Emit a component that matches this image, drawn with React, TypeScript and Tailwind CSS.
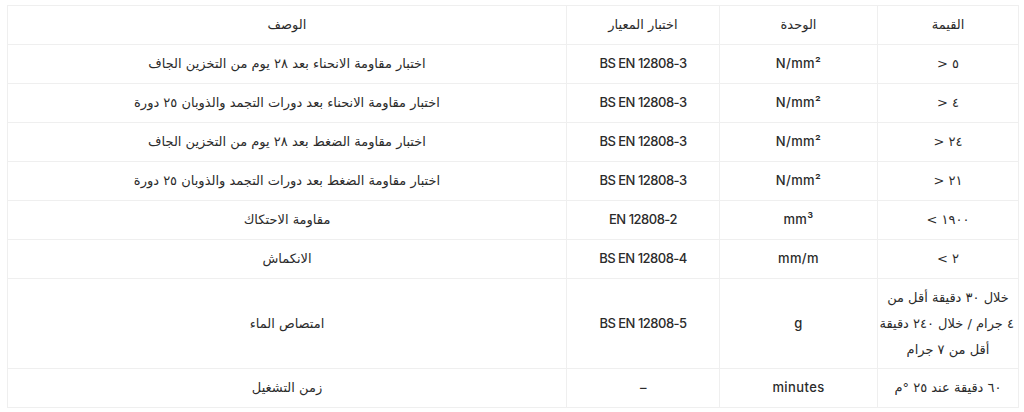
import React from "react";

type Row = { value: React.ReactNode; unit: string; std: string; desc: string; tall?: boolean };

const V = ({ children }: { children: string }) => (
  <span dir="ltr" className="[unicode-bidi:bidi-override]">{children}</span>
);

const rows: Row[] = [
  { value: <V>{"> ٥"}</V>, unit: "N/mm²", std: "BS EN 12808-3", desc: "اختبار مقاومة الانحناء بعد ٢٨ يوم من التخزين الجاف" },
  { value: <V>{"> ٤"}</V>, unit: "N/mm²", std: "BS EN 12808-3", desc: "اختبار مقاومة الانحناء بعد دورات التجمد والذوبان ٢٥ دورة" },
  { value: <V>{"> ٢٤"}</V>, unit: "N/mm²", std: "BS EN 12808-3", desc: "اختبار مقاومة الضغط بعد ٢٨ يوم من التخزين الجاف" },
  { value: <V>{"> ٢١"}</V>, unit: "N/mm²", std: "BS EN 12808-3", desc: "اختبار مقاومة الضغط بعد دورات التجمد والذوبان ٢٥ دورة" },
  { value: <V>{"< ١٩٠٠"}</V>, unit: "mm³", std: "EN 12808-2", desc: "مقاومة الاحتكاك" },
  { value: <V>{"< ٢"}</V>, unit: "mm/m", std: "BS EN 12808-4", desc: "الانكماش" },
  {
    value: (
      <>
        خلال ٣٠ دقيقة أقل من
        <br />
        ٤ جرام / خلال ٢٤٠ دقيقة
        <br />
        أقل من ٧ جرام
      </>
    ),
    unit: "g",
    std: "BS EN 12808-5",
    desc: "امتصاص الماء",
    tall: true,
  },
  { value: <>٦٠ دقيقة عند ٢٥ °م</>, unit: "minutes", std: "–", desc: "زمن التشغيل" },
];

const cell = "border border-[#efefef] text-center align-middle";
const arabic = "font-['DejaVu_Sans',sans-serif] text-[13px]";

export default function App() {
  return (
    <div className="w-[1024px] h-[412px] bg-white pt-[5px] pl-[7px] pr-[5px] font-['Inter','DejaVu_Sans',sans-serif]">
      <table dir="rtl" className="w-[1012px] border-collapse table-fixed text-[13px] font-medium text-[#2b2b2b]">
        <colgroup>
          <col className="w-[141px]" />
          <col className="w-[158px]" />
          <col className="w-[153px]" />
          <col />
        </colgroup>
        <thead>
          <tr className="h-[39px]">
            <th className={cell + " px-2.5 font-medium " + arabic}>القيمة</th>
            <th className={cell + " px-2.5 font-medium " + arabic}>الوحدة</th>
            <th className={cell + " px-2.5 font-medium " + arabic}>اختبار المعيار</th>
            <th className={cell + " px-2.5 font-medium " + arabic}>الوصف</th>
          </tr>
        </thead>
        <tbody>
          {rows.map((r, i) => (
            <tr key={i} className={r.tall ? "h-[90px]" : "h-[39px]"}>
              <td className={cell + " px-1 whitespace-nowrap leading-[26px] " + arabic}>{r.value}</td>
              <td className={cell + " px-2.5 tracking-[0.4px]"}>{r.unit}</td>
              <td className={cell + " px-2.5 tracking-[-0.5px]"}>{r.std}</td>
              <td className={cell + " px-2.5 " + arabic}>{r.desc}</td>
            </tr>
          ))}
        </tbody>
      </table>
    </div>
  );
}
